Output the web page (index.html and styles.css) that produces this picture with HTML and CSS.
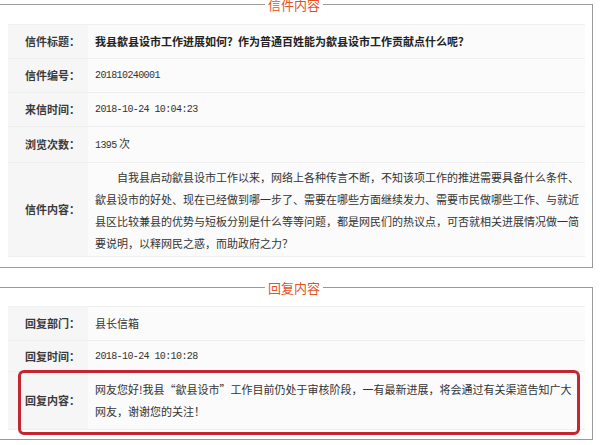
FILE: index.html
```html
<!DOCTYPE html>
<html lang="zh-CN">
<head>
<meta charset="utf-8">
<title>信件内容</title>
<link rel="stylesheet" href="styles.css">
</head>
<body>
<fieldset class="panel panel-letter">
  <legend class="panel-title">信件内容</legend>
  <div class="panel-body">
    <div class="table">
      <div class="row">
        <div class="label">信件标题：</div>
        <div class="value strong">我县歙县设市工作进展如何？作为普通百姓能为歙县设市工作贡献点什么呢？</div>
      </div>
      <div class="row">
        <div class="label">信件编号：</div>
        <div class="value mono">201810240001</div>
      </div>
      <div class="row">
        <div class="label">来信时间：</div>
        <div class="value mono">2018-10-24 10:04:23</div>
      </div>
      <div class="row">
        <div class="label">浏览次数：</div>
        <div class="value"><span class="mono">1395</span> 次</div>
      </div>
      <div class="row row-text">
        <div class="label">信件内容：</div>
        <div class="value text"><p class="para">自我县启动歙县设市工作以来，网络上各种传言不断，不知该项工作的推进需要具备什么条件、歙县设市的好处、现在已经做到哪一步了、需要在哪些方面继续发力、需要市民做哪些工作、与就近县区比较兼县的优势与短板分别是什么等等问题，都是网民们的热议点，可否就相关进展情况做一简要说明，以释网民之惑，而助政府之力？</p></div>
      </div>
    </div>
  </div>
</fieldset>

<fieldset class="panel panel-reply">
  <legend class="panel-title">回复内容</legend>
  <div class="panel-body panel-body-reply">
    <div class="table">
      <div class="row">
        <div class="label">回复部门：</div>
        <div class="value">县长信箱</div>
      </div>
      <div class="row row-short">
        <div class="label">回复时间：</div>
        <div class="value mono">2018-10-24 10:10:28</div>
      </div>
      <div class="row row-reply">
        <div class="label">回复内容：</div>
        <div class="value text">网友您好!我县“歙县设市”工作目前仍处于审核阶段，一有最新进展，将会通过有关渠道告知广大网友，谢谢您的关注！</div>
        <div class="highlight"></div>
      </div>
    </div>
  </div>
</fieldset>
</body>
</html>
```

FILE: styles.css
```css
html, body {
  margin: 0;
  padding: 0;
  background: #ffffff;
  overflow: hidden;
}

body {
  width: 600px;
  height: 445px;
  font-family: "Noto Sans CJK SC", "Noto Sans", sans-serif;
  color: #333333;
  font-size: 11px;
}

.panel {
  box-sizing: border-box;
  margin: -2px 7px 0 -1px;
  padding: 0;
  border: 1px solid #9a9a9a;
  min-width: 0;
}

.panel-reply {
  margin-top: 13px;
}

.panel-title {
  margin-left: 265px;
  padding: 0 3px;
  font-size: 13px;
  line-height: 13px;
  color: #e2531f;
}

.panel-body {
  padding: 13px 7px 10px 8px;
}

.panel-body-reply {
  padding-top: 12px;
  padding-bottom: 9px;
}

.table {
  border-top: 1px solid #f0f0f0;
}

.row {
  display: flex;
  border-bottom: 1px solid #efefef;
  position: relative;
}

.label {
  flex: 0 0 80px;
  box-sizing: border-box;
  padding-left: 17px;
  display: flex;
  align-items: center;
  background: #f6f6f6;
  font-weight: 700;
  color: #3a3a3a;
  font-size: 11px;
  line-height: 13px;
}

.value {
  flex: 1;
  padding: 10px 7px;
  line-height: 13px;
  background: #fbfbfb;
  color: #333333;
}

.strong {
  font-weight: 700;
  color: #222222;
}

.mono {
  font-family: "Liberation Mono", "DejaVu Sans Mono", monospace;
  font-size: 10px;
  letter-spacing: -0.6px;
  color: #333333;
}

.row-short .value {
  padding-top: 9px;
  padding-bottom: 8px;
}

.row-text .value {
  padding: 3px 1px 2px 7px;
  line-height: 22px;
}

.para {
  margin: 0;
  text-indent: 2em;
}

.row-reply .value {
  padding: 6px 7px 7px 7px;
  line-height: 22px;
}

.highlight {
  position: absolute;
  left: 10px;
  right: 5px;
  top: -2px;
  bottom: -6px;
  border: 3px solid #c3262e;
  border-radius: 6px;
  pointer-events: none;
}
```
